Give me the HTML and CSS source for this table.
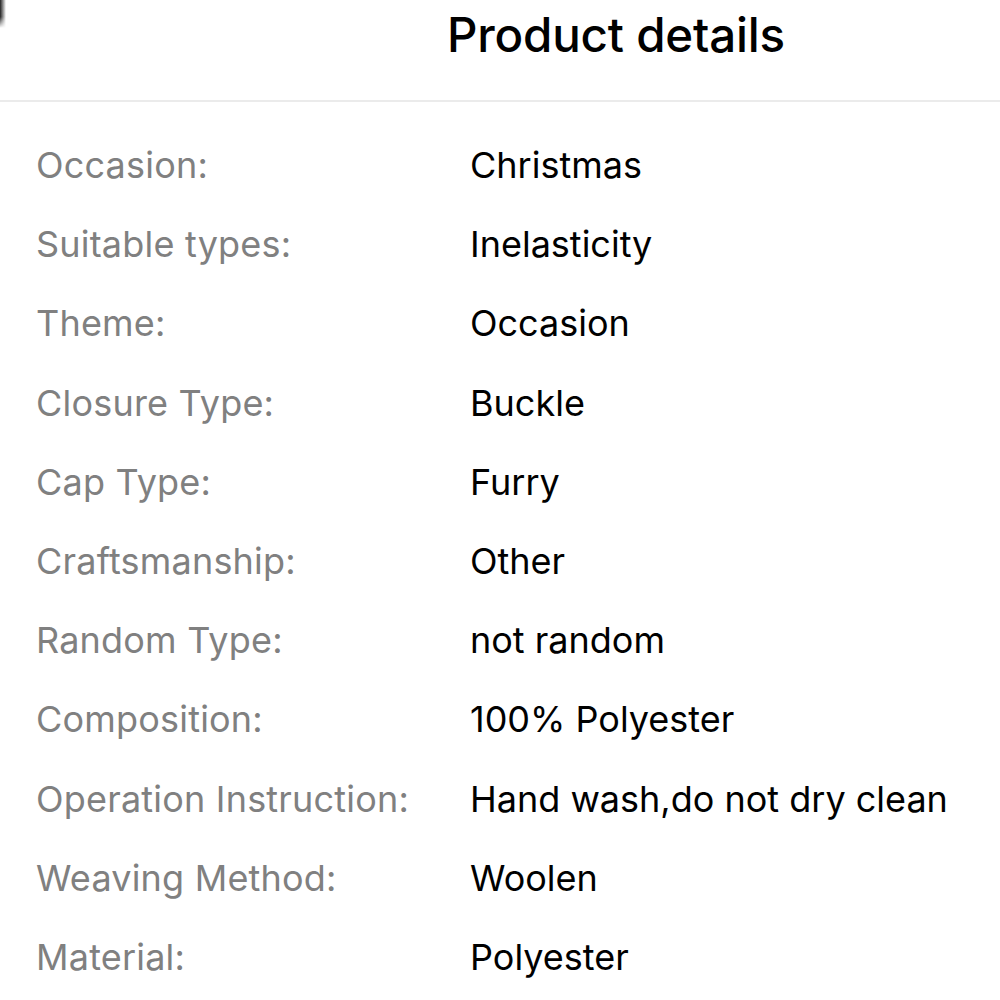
FILE: index.html
```html
<!DOCTYPE html>
<html lang="en">
<head>
    <meta charset="UTF-8">
    <meta name="viewport" content="width=device-width, initial-scale=1.0">
    <title>Product details</title>
    <link rel="stylesheet" href="styles.css">
</head>
<body>
    <div class="header">
        <div class="edge"></div>
        <h1>Product details</h1>
    </div>

    <div class="details">
        <div class="label">Occasion:</div><div class="value">Christmas</div>
        <div class="label">Suitable types:</div><div class="value">Inelasticity</div>
        <div class="label">Theme:</div><div class="value">Occasion</div>
        <div class="label">Closure Type:</div><div class="value">Buckle</div>
        <div class="label">Cap Type:</div><div class="value">Furry</div>
        <div class="label">Craftsmanship:</div><div class="value">Other</div>
        <div class="label">Random Type:</div><div class="value">not random</div>
        <div class="label">Composition:</div><div class="value">100% Polyester</div>
        <div class="label">Operation Instruction:</div><div class="value">Hand wash,do not dry clean</div>
        <div class="label">Weaving Method:</div><div class="value">Woolen</div>
        <div class="label">Material:</div><div class="value">Polyester</div>
    </div>
</body>
</html>
```

FILE: styles.css
```css
body {
    margin: 0;
    background: #fff;
    font-family: Inter, "Liberation Sans", sans-serif;
    color: #000;
    overflow: hidden;
}
.header {
    position: relative;
    height: 102px;
    border-bottom: 2px solid #ebebeb;
    display: flex;
    align-items: center;
    padding-left: 447px;
    padding-bottom: 32px;
    box-sizing: border-box;
}
/* dark sliver of the previous screen at the top-left */
.edge {
    position: absolute;
    left: 0;
    top: 0;
    width: 6px;
    height: 28px;
    background: linear-gradient(to right, #222, rgba(40, 40, 40, 0));
    -webkit-mask-image: linear-gradient(to bottom, #000 60%, transparent);
    mask-image: linear-gradient(to bottom, #000 60%, transparent);
}
.header h1 {
    margin: 0;
    font-size: 47.5px;
    font-weight: 500;
    letter-spacing: -0.2px;
}
.details {
    display: grid;
    grid-template-columns: 434px 1fr;
    padding: 24px 0 0 36px;
    font-size: 36px;
    line-height: 79.2px;
}
.label {
    color: #808080;
    letter-spacing: 0.2px;
}
.value {
    color: #000;
}
```
